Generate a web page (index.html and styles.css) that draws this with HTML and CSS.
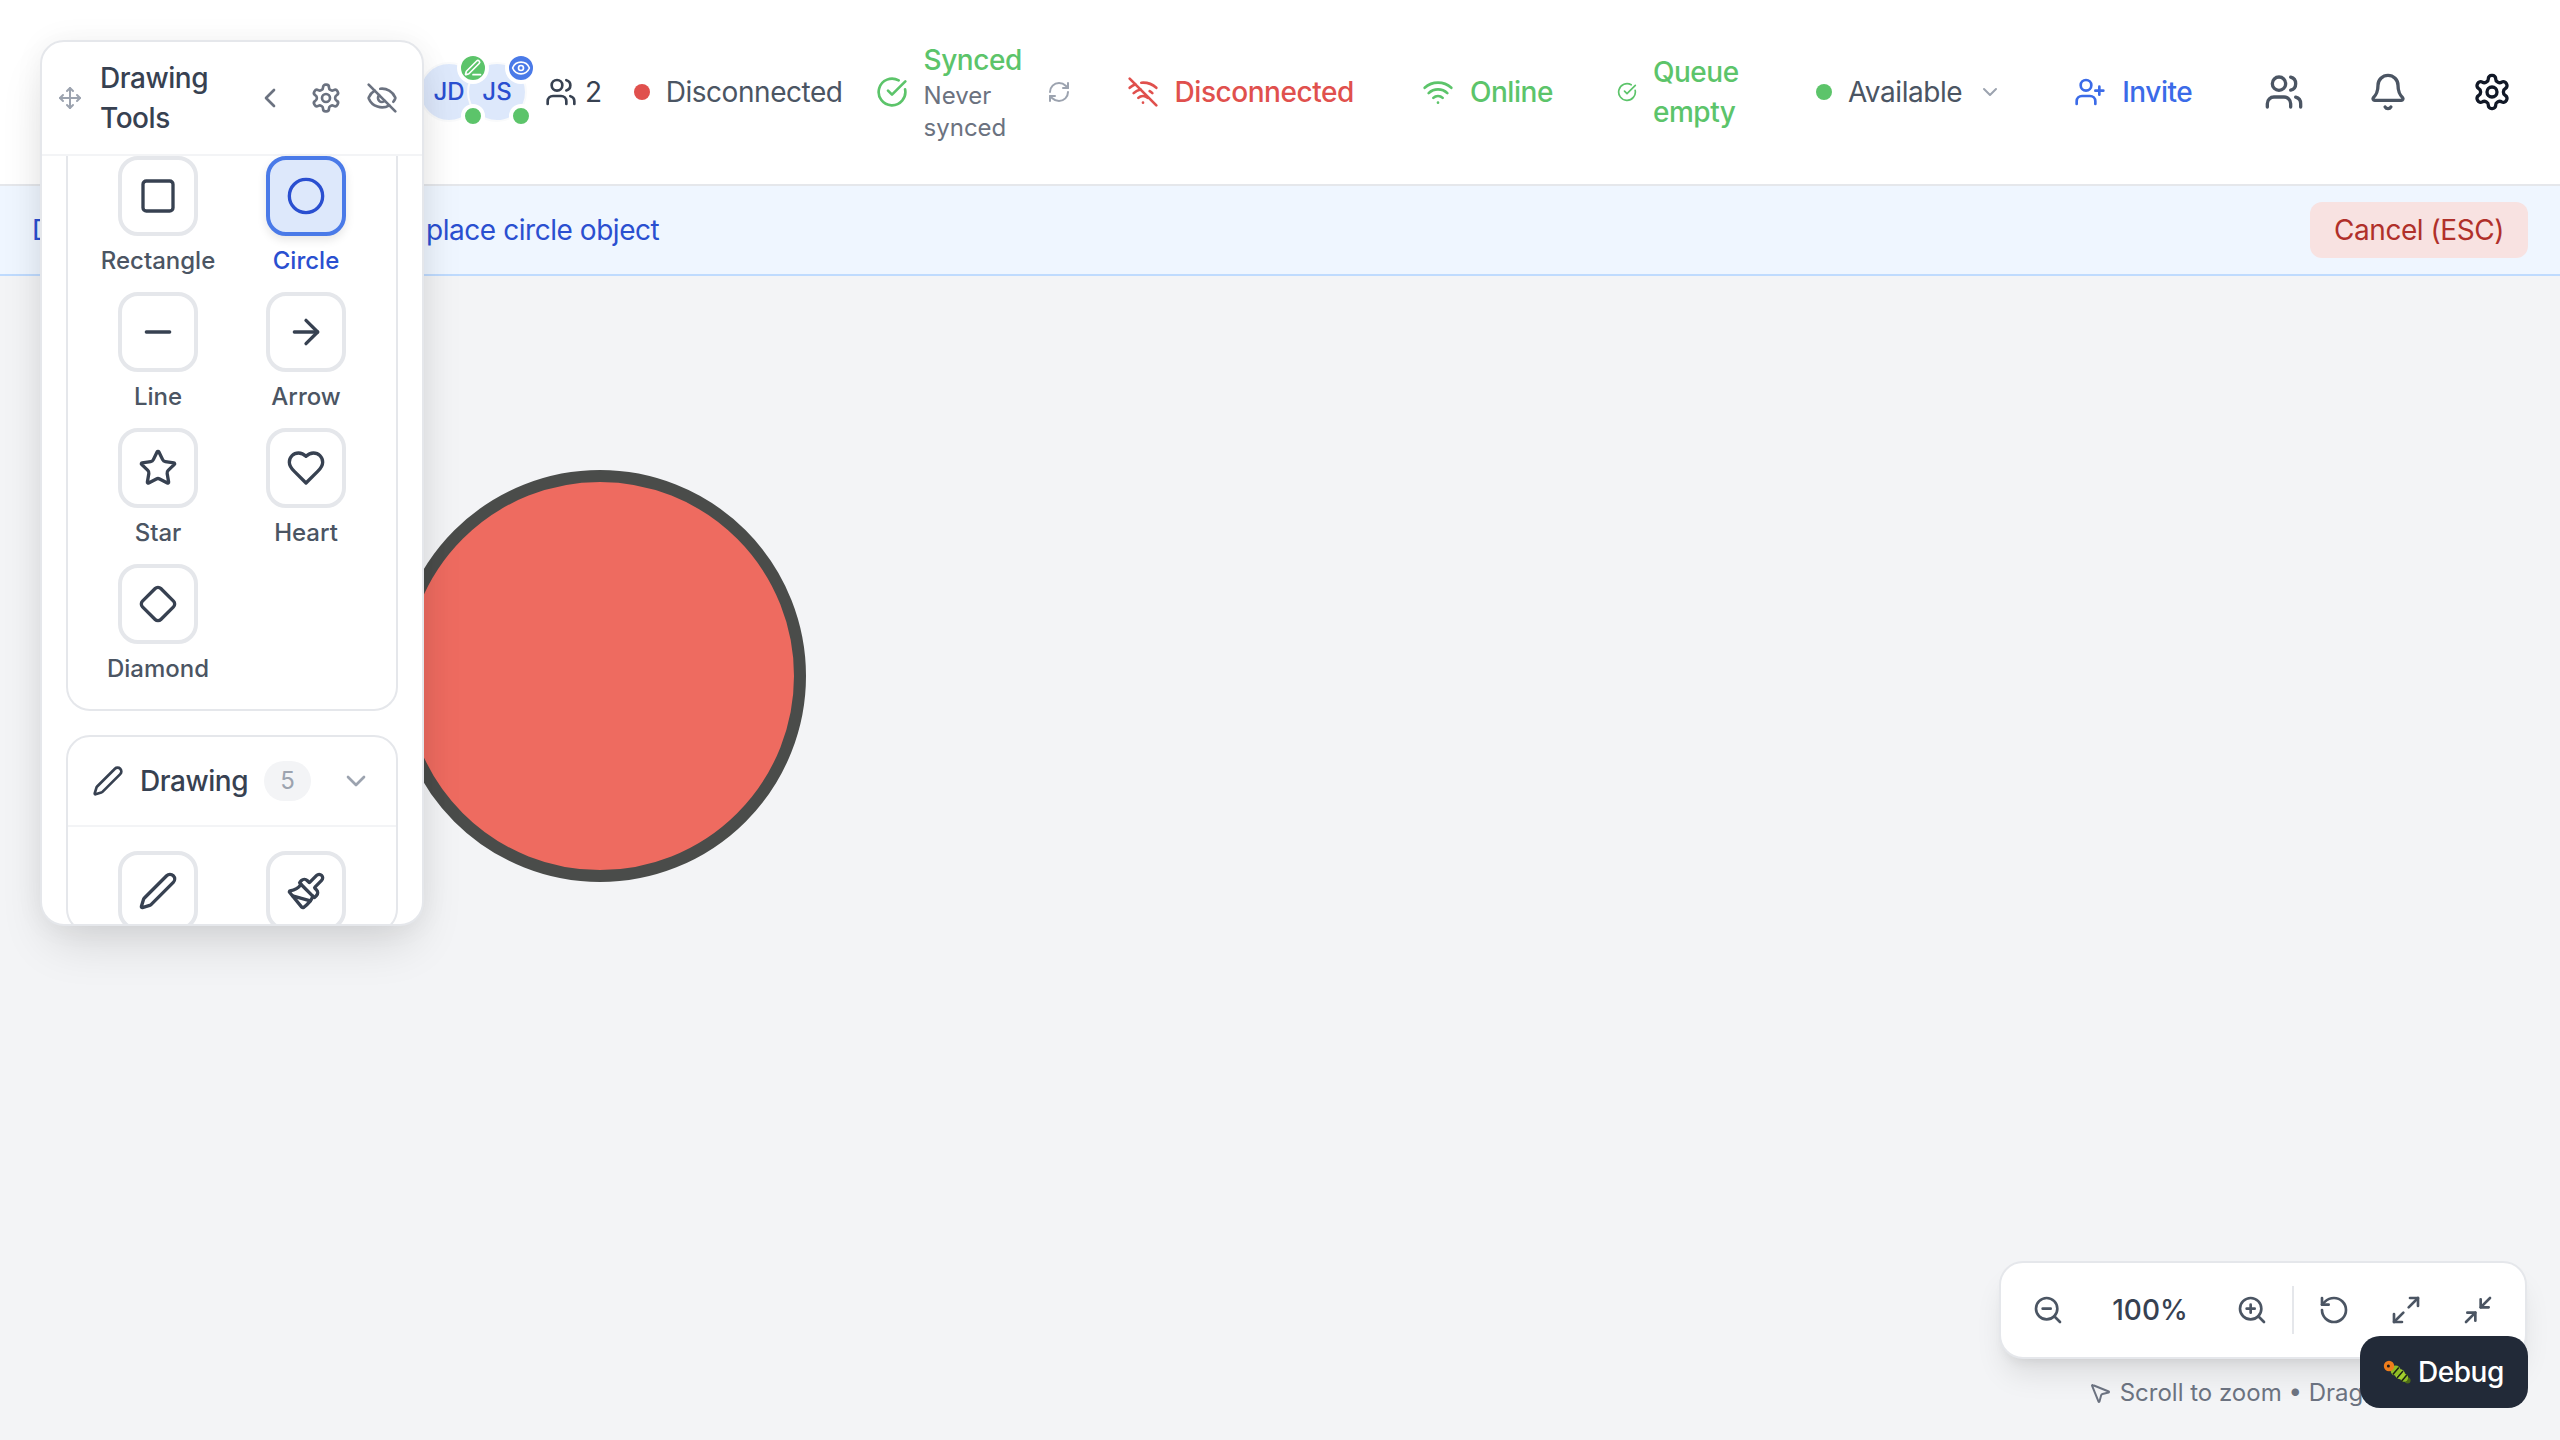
FILE: index.html
```html
<!DOCTYPE html>
<html lang="en">
<head>
<meta charset="utf-8">
<title>Canvas Editor</title>
<link rel="stylesheet" href="styles.css">
</head>
<body>

<svg class="sprite" aria-hidden="true">
<symbol id="move" viewBox="0 0 24 24"><path d="M12 2v20"/><path d="m15 19-3 3-3-3"/><path d="m19 9 3 3-3 3"/><path d="M2 12h20"/><path d="m5 9-3 3 3 3"/><path d="m9 5 3-3 3 3"/></symbol>
<symbol id="chevron-left" viewBox="0 0 24 24"><path d="m15 18-6-6 6-6"/></symbol>
<symbol id="chevron-down" viewBox="0 0 24 24"><path d="m6 9 6 6 6-6"/></symbol>
<symbol id="settings" viewBox="0 0 24 24"><path d="M12.22 2h-.44a2 2 0 0 0-2 2v.18a2 2 0 0 1-1 1.73l-.43.25a2 2 0 0 1-2 0l-.15-.08a2 2 0 0 0-2.73.73l-.22.38a2 2 0 0 0 .73 2.73l.15.1a2 2 0 0 1 1 1.72v.51a2 2 0 0 1-1 1.74l-.15.09a2 2 0 0 0-.73 2.73l.22.38a2 2 0 0 0 2.73.73l.15-.08a2 2 0 0 1 2 0l.43.25a2 2 0 0 1 1 1.73V20a2 2 0 0 0 2 2h.44a2 2 0 0 0 2-2v-.18a2 2 0 0 1 1-1.73l.43-.25a2 2 0 0 1 2 0l.15.08a2 2 0 0 0 2.73-.73l.22-.39a2 2 0 0 0-.73-2.73l-.15-.08a2 2 0 0 1-1-1.74v-.5a2 2 0 0 1 1-1.74l.15-.09a2 2 0 0 0 .73-2.73l-.22-.38a2 2 0 0 0-2.73-.73l-.15.08a2 2 0 0 1-2 0l-.43-.25a2 2 0 0 1-1-1.73V4a2 2 0 0 0-2-2z"/><circle cx="12" cy="12" r="3"/></symbol>
<symbol id="eye-off" viewBox="0 0 24 24"><path d="M10.733 5.076a10.744 10.744 0 0 1 11.205 6.575 1 1 0 0 1 0 .696 10.747 10.747 0 0 1-1.444 2.49"/><path d="M14.084 14.158a3 3 0 0 1-4.242-4.242"/><path d="M17.479 17.499a10.75 10.75 0 0 1-15.417-5.151 1 1 0 0 1 0-.696 10.75 10.75 0 0 1 4.446-5.143"/><path d="m2 2 20 20"/></symbol>
<symbol id="eye" viewBox="0 0 24 24"><path d="M2.062 12.348a1 1 0 0 1 0-.696 10.75 10.75 0 0 1 19.876 0 1 1 0 0 1 0 .696 10.75 10.75 0 0 1-19.876 0"/><circle cx="12" cy="12" r="3"/></symbol>
<symbol id="pen-line" viewBox="0 0 24 24"><path d="M12 20h9"/><path d="M16.376 3.622a1 1 0 0 1 3.002 3.002L7.368 18.635a2 2 0 0 1-.855.506l-2.872.838a.5.5 0 0 1-.62-.62l.838-2.872a2 2 0 0 1 .506-.854z"/></symbol>
<symbol id="square" viewBox="0 0 24 24"><rect x="3" y="3" width="18" height="18" rx="2"/></symbol>
<symbol id="circle" viewBox="0 0 24 24"><circle cx="12" cy="12" r="10"/></symbol>
<symbol id="minus" viewBox="0 0 24 24"><path d="M5 12h14"/></symbol>
<symbol id="arrow-right" viewBox="0 0 24 24"><path d="M5 12h14"/><path d="m12 5 7 7-7 7"/></symbol>
<symbol id="star" viewBox="0 0 24 24"><path d="M11.525 2.295a.53.53 0 0 1 .95 0l2.31 4.679a2.123 2.123 0 0 0 1.595 1.16l5.166.756a.53.53 0 0 1 .294.904l-3.736 3.638a2.123 2.123 0 0 0-.611 1.878l.882 5.14a.53.53 0 0 1-.771.56l-4.618-2.428a2.122 2.122 0 0 0-1.973 0L6.396 21.01a.53.53 0 0 1-.77-.56l.881-5.139a2.122 2.122 0 0 0-.611-1.879L2.16 9.795a.53.53 0 0 1 .294-.906l5.165-.755a2.122 2.122 0 0 0 1.597-1.16z"/></symbol>
<symbol id="heart" viewBox="0 0 24 24"><path d="M19 14c1.49-1.46 3-3.21 3-5.5A5.5 5.5 0 0 0 16.5 3c-1.76 0-3 .5-4.5 2-1.5-1.5-2.74-2-4.5-2A5.5 5.5 0 0 0 2 8.5c0 2.3 1.5 4.05 3 5.5l7 7Z"/></symbol>
<symbol id="diamond" viewBox="0 0 24 24"><path d="M2.7 10.3a2.41 2.41 0 0 0 0 3.41l7.59 7.59a2.41 2.41 0 0 0 3.41 0l7.59-7.59a2.41 2.41 0 0 0 0-3.41l-7.59-7.59a2.41 2.41 0 0 0-3.41 0Z"/></symbol>
<symbol id="pen" viewBox="0 0 24 24"><path d="M21.174 6.812a1 1 0 0 0-3.986-3.987L3.842 16.174a2 2 0 0 0-.5.83l-1.321 4.352a.5.5 0 0 0 .623.622l4.353-1.32a2 2 0 0 0 .83-.497z"/></symbol>
<symbol id="paintbrush" viewBox="0 0 24 24"><path d="m14.622 17.897-10.68-2.913"/><path d="M18.376 2.622a1 1 0 1 1 3.002 3.002L17.36 9.643a.5.5 0 0 0 0 .707l.944.944a2.41 2.41 0 0 1 0 3.408l-.944.944a.5.5 0 0 1-.707 0L8.354 7.348a.5.5 0 0 1 0-.707l.944-.944a2.41 2.41 0 0 1 3.408 0l.944.944a.5.5 0 0 0 .707 0z"/><path d="M9 8c-1.804 2.71-3.97 3.46-6.583 3.948a.507.507 0 0 0-.302.819l7.32 8.883a1 1 0 0 0 1.185.204C12.735 20.405 16 16.792 16 15"/></symbol>
<symbol id="users" viewBox="0 0 24 24"><path d="M16 21v-2a4 4 0 0 0-4-4H6a4 4 0 0 0-4 4v2"/><circle cx="9" cy="7" r="4"/><path d="M22 21v-2a4 4 0 0 0-3-3.87"/><path d="M16 3.13a4 4 0 0 1 0 7.75"/></symbol>
<symbol id="user-plus" viewBox="0 0 24 24"><path d="M16 21v-2a4 4 0 0 0-4-4H6a4 4 0 0 0-4 4v2"/><circle cx="9" cy="7" r="4"/><path d="M19 8v6"/><path d="M22 11h-6"/></symbol>
<symbol id="check" viewBox="0 0 24 24"><path d="M21.801 10A10 10 0 1 1 17 3.335"/><path d="m9 11 3 3L22 4"/></symbol>
<symbol id="refresh" viewBox="0 0 24 24"><path d="M3 12a9 9 0 0 1 9-9 9.75 9.75 0 0 1 6.74 2.74L21 8"/><path d="M21 3v5h-5"/><path d="M21 12a9 9 0 0 1-9 9 9.75 9.75 0 0 1-6.74-2.74L3 16"/><path d="M8 16H3v5"/></symbol>
<symbol id="wifi-off" viewBox="0 0 24 24"><path d="M12 20h.01"/><path d="M8.5 16.429a5 5 0 0 1 7 0"/><path d="M5 12.859a10 10 0 0 1 5.17-2.69"/><path d="M19 12.859a10 10 0 0 0-2.007-1.523"/><path d="M2 8.82a15 15 0 0 1 4.177-2.643"/><path d="M22 8.82a15 15 0 0 0-11.288-3.764"/><path d="m2 2 20 20"/></symbol>
<symbol id="wifi" viewBox="0 0 24 24"><path d="M12 20h.01"/><path d="M2 8.82a15 15 0 0 1 20 0"/><path d="M5 12.859a10 10 0 0 1 14 0"/><path d="M8.5 16.429a5 5 0 0 1 7 0"/></symbol>
<symbol id="bell" viewBox="0 0 24 24"><path d="M10.268 21a2 2 0 0 0 3.464 0"/><path d="M3.262 15.326A1 1 0 0 0 4 17h16a1 1 0 0 0 .74-1.673C19.41 13.956 18 12.499 18 8A6 6 0 0 0 6 8c0 4.499-1.411 5.956-2.738 7.326"/></symbol>
<symbol id="zoom-out" viewBox="0 0 24 24"><circle cx="11" cy="11" r="8"/><path d="m21 21-4.3-4.3"/><path d="M8 11h6"/></symbol>
<symbol id="zoom-in" viewBox="0 0 24 24"><circle cx="11" cy="11" r="8"/><path d="m21 21-4.3-4.3"/><path d="M11 8v6"/><path d="M8 11h6"/></symbol>
<symbol id="rotate" viewBox="0 0 24 24"><path d="M3 12a9 9 0 1 0 9-9 9.75 9.75 0 0 0-6.74 2.74L3 8"/><path d="M3 3v5h5"/></symbol>
<symbol id="maximize" viewBox="0 0 24 24"><path d="M15 3h6v6"/><path d="m21 3-7 7"/><path d="m3 21 7-7"/><path d="M9 21H3v-6"/></symbol>
<symbol id="minimize" viewBox="0 0 24 24"><path d="m14 10 7-7"/><path d="M20 10h-6V4"/><path d="m3 21 7-7"/><path d="M4 14h6v6"/></symbol>
<symbol id="pointer" viewBox="0 0 24 24"><path d="M4.037 4.688a.495.495 0 0 1 .651-.651l16 6.5a.5.5 0 0 1-.063.947l-6.124 1.58a2 2 0 0 0-1.438 1.435l-1.579 6.126a.5.5 0 0 1-.947.063z"/></symbol>
</svg>

<header class="topbar">
    <div class="title-slot"><span class="peek-bar"></span><span class="peek-dome"></span></div>

    <div class="avatars">
        <div class="avatar">JD
            <span class="badge badge-edit"><svg class="icon"><use href="#pen-line"/></svg></span>
            <span class="presence"></span>
        </div>
        <div class="avatar">JS
            <span class="badge badge-view"><svg class="icon"><use href="#eye"/></svg></span>
            <span class="presence"></span>
        </div>
    </div>
    <div class="user-count"><svg class="icon i32"><use href="#users"/></svg><span>2</span></div>

    <div class="conn"><span class="dot dot-red"></span><span>Disconnected</span></div>

    <div class="sync">
        <svg class="icon i32 green"><use href="#check"/></svg>
        <div class="sync-text">
            <div class="sync-title">Synced</div>
            <div class="sync-sub">Never synced</div>
        </div>
    </div>
    <svg class="icon i24 refresh"><use href="#refresh"/></svg>

    <div class="stat stat-off"><svg class="icon i32"><use href="#wifi-off"/></svg><span>Disconnected</span></div>
    <div class="stat stat-on"><svg class="icon i32"><use href="#wifi"/></svg><span>Online</span></div>
    <div class="stat stat-queue"><svg class="icon i20"><use href="#check"/></svg><span class="queue-text">Queue empty</span></div>

    <div class="status"><span class="dot dot-green"></span><span>Available</span><svg class="icon i24 muted"><use href="#chevron-down"/></svg></div>

    <div class="invite"><svg class="icon i32"><use href="#user-plus"/></svg><span>Invite</span></div>

    <div class="actions">
        <svg class="icon i40 slate"><use href="#users"/></svg>
        <svg class="icon i40 slate"><use href="#bell"/></svg>
        <svg class="icon i40 ink"><use href="#settings"/></svg>
    </div>
</header>

<div class="banner">
    <span><span class="banner-lead">Drawing mode: Click canvas to </span>place circle object</span>
    <button class="cancel">Cancel (ESC)</button>
</div>

<main class="canvas">
    <svg class="shape" width="424" height="424" viewBox="0 0 424 424"><circle cx="212" cy="212" r="200" fill="#ee6b60" stroke="#4a4c4a" stroke-width="12"/></svg>

    <div class="zoom-dock">
        <div class="zoom-box">
            <button class="zoom-btn"><svg class="icon i32"><use href="#zoom-out"/></svg></button>
            <span class="zoom-value">100%</span>
            <button class="zoom-btn"><svg class="icon i32"><use href="#zoom-in"/></svg></button>
            <span class="zoom-sep"></span>
            <button class="zoom-btn"><svg class="icon i32"><use href="#rotate"/></svg></button>
            <button class="zoom-btn"><svg class="icon i32"><use href="#maximize"/></svg></button>
            <button class="zoom-btn"><svg class="icon i32"><use href="#minimize"/></svg></button>
        </div>
        <div class="zoom-hint"><svg class="icon i24"><use href="#pointer"/></svg><span>Scroll to zoom • Drag to pan</span></div>
    </div>

    <button class="debug">
        <svg class="bug" width="28" height="24" viewBox="0 0 28 24">
            <circle cx="24.6" cy="20.6" r="3" fill="#4d6b16"/>
            <circle cx="21" cy="17.6" r="4.2" fill="#8fbc26"/>
            <circle cx="17" cy="14.2" r="5" fill="#a3cf2e"/>
            <circle cx="12.6" cy="10.6" r="5" fill="#8fbc26"/>
            <path d="M18.4 21.4 24 14.8M14 18l6-7M9.8 14.6l6-7" stroke="#1c2214" stroke-width="1.5"/>
            <circle cx="6" cy="6" r="5.2" fill="#ee7d1c"/>
            <circle cx="5.4" cy="6" r="1.5" fill="#1a1a1a"/>
        </svg>
        <span>Debug</span>
    </button>
</main>

<aside class="panel">
    <div class="panel-head">
        <svg class="icon i24 grip"><use href="#move"/></svg>
        <h2>Drawing Tools</h2>
        <button class="head-btn"><svg class="icon i32"><use href="#chevron-left"/></svg></button>
        <button class="head-btn"><svg class="icon i32"><use href="#settings"/></svg></button>
        <button class="head-btn"><svg class="icon i32"><use href="#eye-off"/></svg></button>
    </div>
    <div class="panel-body">
        <section class="group group-scrolled">
            <div class="tools">
                <div class="tool"><div class="tool-btn"><svg class="icon i40"><use href="#square"/></svg></div><span>Rectangle</span></div>
                <div class="tool active"><div class="tool-btn"><svg class="icon i40"><use href="#circle"/></svg></div><span>Circle</span></div>
                <div class="tool"><div class="tool-btn"><svg class="icon i40"><use href="#minus"/></svg></div><span>Line</span></div>
                <div class="tool"><div class="tool-btn"><svg class="icon i40"><use href="#arrow-right"/></svg></div><span>Arrow</span></div>
                <div class="tool"><div class="tool-btn"><svg class="icon i40"><use href="#star"/></svg></div><span>Star</span></div>
                <div class="tool"><div class="tool-btn"><svg class="icon i40"><use href="#heart"/></svg></div><span>Heart</span></div>
                <div class="tool"><div class="tool-btn"><svg class="icon i40"><use href="#diamond"/></svg></div><span>Diamond</span></div>
            </div>
        </section>
        <section class="group">
            <div class="group-head">
                <svg class="icon i32"><use href="#pen"/></svg>
                <span class="group-name">Drawing</span>
                <span class="group-count">5</span>
                <svg class="icon i32 group-toggle"><use href="#chevron-down"/></svg>
            </div>
            <div class="tools tools-open">
                <div class="tool"><div class="tool-btn"><svg class="icon i40"><use href="#pen"/></svg></div></div>
                <div class="tool"><div class="tool-btn"><svg class="icon i40"><use href="#paintbrush"/></svg></div></div>
            </div>
        </section>
    </div>
</aside>

</body>
</html>
```

FILE: styles.css
```css
* {
    box-sizing: border-box;
}
html, body {
    height: 100%;
}
body {
    margin: 0;
    display: flex;
    flex-direction: column;
    height: 1440px;
    overflow: hidden;
    position: relative;
    background: #f3f4f6;
    font-family: Inter, "Liberation Sans", sans-serif;
    font-size: 28px;
    line-height: 40px;
    letter-spacing: -0.45px;
    color: #374151;
}
button {
    font: inherit;
    letter-spacing: inherit;
    border: 0;
    background: none;
    color: inherit;
    padding: 0;
}
.sprite {
    display: none;
}

/* icons */
.icon {
    display: block;
    flex: none;
    fill: none;
    stroke: currentColor;
    stroke-width: 2;
    stroke-linecap: round;
    stroke-linejoin: round;
}
.i20 { width: 20px; height: 20px; }
.i24 { width: 24px; height: 24px; }
.i32 { width: 32px; height: 32px; }
.i40 { width: 40px; height: 40px; }
.green { color: #5cc46a; }
.muted { color: #9ca3af; }
.slate { color: #4b5563; }
.ink { color: #111827; }

/* top bar */
.topbar {
    display: flex;
    align-items: center;
    flex: none;
    height: 186px;
    padding: 0 48px 0 32px;
    background: #fff;
    border-bottom: 2px solid #e5e7eb;
}
.title-slot {
    position: relative;
    width: 387px;
    flex: none;
    height: 40px;
}
.peek-bar {
    position: absolute;
    left: 105px;
    top: -2px;
    width: 21px;
    height: 4px;
    background: #1f2937;
}
.peek-dome {
    position: absolute;
    left: 191px;
    top: -2px;
    width: 11px;
    height: 11px;
    border-radius: 50%;
    background: #1f2937;
}
.avatars {
    display: flex;
}
.avatar {
    position: relative;
    display: flex;
    align-items: center;
    justify-content: center;
    width: 60px;
    height: 60px;
    border: 2px solid #f9fafb;
    border-radius: 50%;
    background: #dde8fb;
    color: #2a4fd0;
    font-size: 24px;
    font-weight: 500;
    letter-spacing: 0;
}
.avatar + .avatar {
    margin-left: -12px;
}
.badge {
    position: absolute;
    z-index: 1;
    top: -12px;
    right: -12px;
    width: 32px;
    height: 32px;
    padding: 4px;
    border: 4px solid #fff;
    border-radius: 50%;
    color: #fff;
    display: flex;
    align-items: center;
    justify-content: center;
}
.badge .icon {
    width: 20px;
    height: 20px;
}
.badge-edit { background: #5cc46a; }
.badge-view { background: #4a7ae8; }
.presence {
    position: absolute;
    z-index: 1;
    right: -8px;
    bottom: -8px;
    width: 24px;
    height: 24px;
    border: 4px solid #fff;
    border-radius: 50%;
    background: #5cc46a;
}
.user-count {
    display: flex;
    align-items: center;
    gap: 8px;
    margin-left: 18px;
}
.dot {
    flex: none;
    width: 16px;
    height: 16px;
    border-radius: 50%;
}
.dot-red { background: #e0504d; }
.dot-green { background: #5cc46a; }
.conn {
    display: flex;
    align-items: center;
    gap: 16px;
    margin-left: 32px;
    color: #4b5563;
}
.sync {
    display: flex;
    align-items: center;
    gap: 16px;
    margin-left: 33px;
}
.sync-text {
    width: 100px;
}
.sync-title {
    color: #5cc46a;
    font-weight: 500;
}
.sync-sub {
    font-size: 24px;
    line-height: 32px;
    letter-spacing: 0;
    color: #6b7280;
}
.refresh {
    margin-left: 23px;
    color: #9ca3af;
}
.stat {
    display: flex;
    align-items: center;
    gap: 16px;
    font-weight: 500;
    color: #5cc46a;
}
.stat-off {
    margin-left: 56px;
    color: #e0504d;
}
.stat-on {
    margin-left: 68px;
}
.stat-queue {
    margin-left: 64px;
}
.queue-text {
    width: 90px;
}
.status {
    display: flex;
    align-items: center;
    gap: 16px;
    margin-left: 73px;
    color: #4b5563;
}
.invite {
    display: flex;
    align-items: center;
    gap: 16px;
    margin-left: 72px;
    color: #3b6be8;
    font-weight: 500;
}
.actions {
    display: flex;
    gap: 64px;
    margin-left: 72px;
}

/* placement banner */
.banner {
    display: flex;
    align-items: center;
    justify-content: space-between;
    flex: none;
    padding: 16px 32px;
    background: #eff6ff;
    border-bottom: 2px solid #bfdbfe;
    color: #2a4fd0;
}
.banner-lead {
    letter-spacing: -0.78px;
}
.cancel {
    height: 56px;
    padding: 0 24px;
    border-radius: 12px;
    background: #f8e2e1;
    color: #b0302a;
}

/* canvas */
.canvas {
    position: relative;
    flex: 1;
}
.shape {
    position: absolute;
    left: 388px;
    top: 188px;
}
.zoom-dock {
    position: absolute;
    right: 33px;
    bottom: 31px;
    width: 528px;
}
.zoom-box {
    display: flex;
    align-items: center;
    gap: 8px;
    height: 98px;
    padding: 0 15px;
    background: #fff;
    border: 2px solid #e5e7eb;
    border-radius: 24px;
    box-shadow: 0 20px 30px -6px rgba(0, 0, 0, .1), 0 8px 12px -6px rgba(0, 0, 0, .08);
}
.zoom-btn {
    display: flex;
    align-items: center;
    justify-content: center;
    width: 64px;
    height: 64px;
    color: #4b5563;
}
.zoom-value {
    width: 124px;
    text-align: center;
    font-weight: 500;
    letter-spacing: 0;
}
.zoom-sep {
    width: 2px;
    height: 48px;
    background: #e5e7eb;
}
.zoom-hint {
    display: flex;
    align-items: center;
    justify-content: center;
    gap: 8px;
    margin-top: 18px;
    padding-left: 3px;
    font-size: 24px;
    line-height: 32px;
    letter-spacing: 0;
    color: #6b7280;
}
.debug {
    position: absolute;
    right: 32px;
    bottom: 32px;
    display: flex;
    align-items: center;
    gap: 7px;
    width: 168px;
    height: 72px;
    padding: 0 23px;
    border-radius: 20px;
    background: #222a38;
    color: #fff;
    font-weight: 500;
}
.bug {
    flex: none;
}

/* drawing tools panel */
.panel {
    position: absolute;
    left: 40px;
    top: 40px;
    z-index: 5;
    width: 384px;
    height: 886px;
    overflow: hidden;
    background: #fff;
    border: 2px solid #e5e7eb;
    border-radius: 24px;
    box-shadow: 0 24px 50px -10px rgba(0, 0, 0, .14), 0 0 30px rgba(0, 0, 0, .05);
}
.panel-head {
    display: flex;
    align-items: center;
    gap: 8px;
    padding: 16px;
    border-bottom: 2px solid #f3f4f6;
}
.grip {
    color: #9ca3af;
    margin-right: 10px;
}
.panel-head h2 {
    flex: 1;
    margin: 0;
    font-size: 28px;
    line-height: 40px;
    font-weight: 500;
}
.head-btn {
    flex: none;
    padding: 8px;
    color: #6b7280;
}
.panel-body {
    padding: 0 24px;
}
.group {
    border: 2px solid #e5e7eb;
    border-radius: 24px;
    margin-bottom: 24px;
}
.group-scrolled {
    border-top: 0;
    border-top-left-radius: 0;
    border-top-right-radius: 0;
    padding-bottom: 24px;
}
.group-head {
    display: flex;
    align-items: center;
    height: 90px;
    padding: 0 24px;
    border-bottom: 2px solid #f3f4f6;
}
.group-name {
    margin-left: 16px;
    font-weight: 500;
}
.group-count {
    margin-left: 16px;
    padding: 0 16px;
    border-radius: 20px;
    background: #f3f4f6;
    color: #9ca3af;
    font-size: 24px;
    letter-spacing: 0;
}
.group-toggle {
    margin-left: auto;
    color: #9ca3af;
}
.tools {
    display: grid;
    grid-template-columns: 1fr 1fr;
    column-gap: 8px;
    row-gap: 15px;
    padding: 0 20px;
}
.tools-open {
    padding-top: 24px;
}
.tool {
    display: flex;
    flex-direction: column;
    align-items: center;
    gap: 9px;
    font-size: 24px;
    line-height: 32px;
    font-weight: 500;
    letter-spacing: 0;
    color: #4b5563;
}
.tool-btn {
    display: flex;
    align-items: center;
    justify-content: center;
    width: 80px;
    height: 80px;
    border: 4px solid #e5e7eb;
    border-radius: 20px;
    color: #374151;
    background: #fff;
}
.tool.active {
    color: #2a4fd0;
}
.tool.active .tool-btn {
    border-color: #4a7ae8;
    background: #dde8fb;
    color: #2a4fd0;
    box-shadow: 0 4px 10px rgba(0, 0, 0, .1);
}
```
